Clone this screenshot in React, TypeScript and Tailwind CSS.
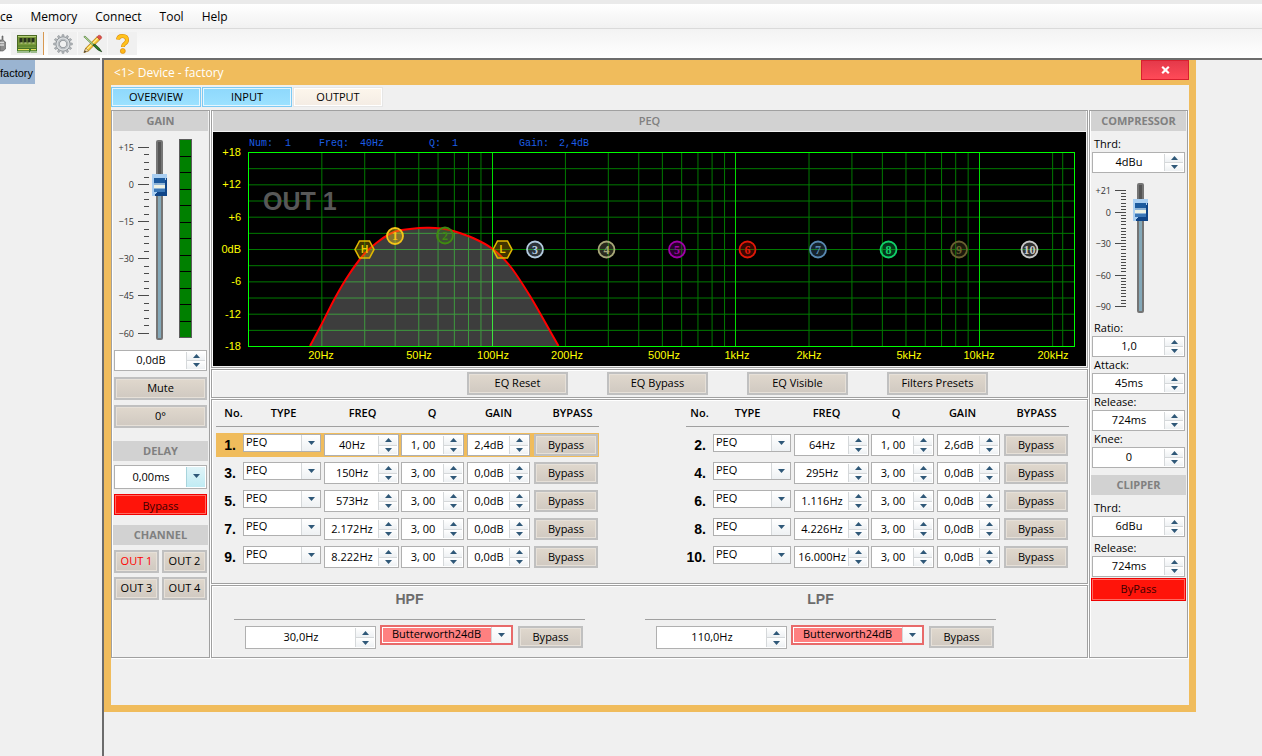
import React from "react";

const ui = "font-['Open_Sans','Noto_Sans',sans-serif]";
const panel =
  "border border-[#a0a0a0] p-px shadow-[inset_1px_1px_0_#fff,1px_1px_0_#fff]";
const boxBorder = "border border-[#b0b0b0]";

function Header({ children, light }: { children: string; light?: boolean }) {
  return (
    <h2
      className={`flex h-5 items-center justify-center bg-[#d2d2d2] pt-px text-[11px] text-[#808080] ${
        light ? "font-semibold" : "font-bold"
      }`}
    >
      {children}
    </h2>
  );
}

function Triangle({ up }: { up?: boolean }) {
  return (
    <svg width="7" height="4" viewBox="0 0 7 4" aria-hidden="true">
      <path d={up ? "M0 4 L3.5 0 L7 4 Z" : "M0 0 L7 0 L3.5 4 Z"} fill="#2f5878" />
    </svg>
  );
}

function Spin({ label, value, className = "" }: { label: string; value: string; className?: string }) {
  const half =
    "flex min-h-0 flex-1 items-center justify-center bg-linear-to-b from-white to-[#eef1f3]";
  return (
    <div className={`flex bg-white p-px ${boxBorder} ${className}`}>
      <input
        aria-label={label}
        defaultValue={value}
        className="min-w-0 flex-1 bg-white text-center text-[11px] text-black outline-none"
      />
      <div className="flex w-[19px] shrink-0 flex-col border-l border-[#d5d8da]">
        <button aria-label={`${label} up`} className={half}>
          <Triangle up />
        </button>
        <button aria-label={`${label} down`} className={`border-t border-[#d5d8da] ${half}`}>
          <Triangle />
        </button>
      </div>
    </div>
  );
}

function Btn({ children, className = "" }: { children: string; className?: string }) {
  return (
    <button
      className={`flex items-center justify-center border-2 border-[#c0c0c0] bg-linear-to-b from-[#e0d8cd] to-[#d0c9c1] text-[11px] whitespace-nowrap shadow-[inset_0_0_0_1px_#e6e0d8] ${className}`}
    >
      {children}
    </button>
  );
}

function RedBtn({ children, className = "" }: { children: string; className?: string }) {
  return (
    <button
      className={`flex items-center justify-center border border-[#f00000] bg-[#ff140a] text-[11px] text-[#3c0000] shadow-[inset_0_0_0_1px_#ff6a60] ${className}`}
    >
      {children}
    </button>
  );
}

function Scale({
  width,
  height,
  top,
  step,
  count,
  majors,
}: {
  width: number;
  height: number;
  top: number;
  step: number;
  count: number;
  majors: Record<number, string>;
}) {
  const ticks = Array.from({ length: count + 1 }, (_, i) => i);
  return (
    <svg width={width} height={height} className="shrink-0" aria-hidden="true">
      {ticks.map((i) => {
        const y = Math.round(top + i * step) + 0.5;
        const label = majors[i];
        return (
          <g key={i}>
            <line x1={width - (label ? 11 : 5)} x2={width} y1={y} y2={y} stroke="#4a4a4a" />
            {label && (
              <text
                x={width - 15}
                y={y + 3}
                textAnchor="end"
                fontSize="9"
                fill="#333"
                fontFamily="'Open Sans','Noto Sans',sans-serif"
              >
                {label}
              </text>
            )}
          </g>
        );
      })}
    </svg>
  );
}

const sliderClass =
  "m-0 w-4 shrink-0 appearance-none bg-transparent [writing-mode:vertical-lr] [direction:rtl] " +
  "[&::-webkit-slider-runnable-track]:mx-auto [&::-webkit-slider-runnable-track]:h-full [&::-webkit-slider-runnable-track]:w-[7px] " +
  "[&::-webkit-slider-runnable-track]:rounded-xs [&::-webkit-slider-runnable-track]:border-2 [&::-webkit-slider-runnable-track]:border-[#757575] " +
  "[&::-webkit-slider-thumb]:-ml-[6px] [&::-webkit-slider-thumb]:h-[22px] [&::-webkit-slider-thumb]:w-[15px] [&::-webkit-slider-thumb]:appearance-none " +
  "[&::-webkit-slider-thumb]:[background:linear-gradient(#1c5a9e_0_5px,#8fb4d6_5px_7px,#eef2e4_7px_10px,#8fb4d6_10px_11px,#3b78b8_11px)_center/11px_14px_no-repeat,linear-gradient(125deg,#aacff2_0_58%,#0f4588_58%)]";

const freqX = (f: number) => 35.5 + 243.6 * Math.log10(f / 10);
const vLines = [
  20, 30, 40, 50, 60, 70, 80, 90, 200, 300, 400, 500, 600, 700, 800, 900, 2000, 3000, 4000, 5000,
  6000, 7000, 8000, 9000, 20000, 22000,
];
const curve: [number, number][] = [
  [97, 214], [109, 191.5], [122, 166], [135, 144], [150, 123.5], [164, 110.5], [175, 103],
  [187, 98.3], [214, 95.7], [230, 96.8], [242, 99.5], [260, 106], [279, 116.5], [297, 134],
  [317, 164], [337, 199], [345.5, 214],
];
const curvePath = curve
  .map(([x, y], i) => {
    if (i === 0) return `M${x} ${y}`;
    const a = curve[Math.max(0, i - 2)];
    const b = curve[i - 1];
    const d = curve[Math.min(curve.length - 1, i + 1)];
    return `C${b[0] + (x - a[0]) / 6} ${b[1] + (y - a[1]) / 6} ${x - (d[0] - b[0]) / 6} ${
      y - (d[1] - b[1]) / 6
    } ${x} ${y}`;
  })
  .join(" ");

const nodes: [string, number, number, string, number][] = [
  ["1", 182, 104, "#f5c518", 0.4],
  ["2", 232, 103.5, "#3f8a10", 0.25],
  ["3", 322, 117.5, "#b4cce0", 0.25],
  ["4", 393.5, 117.5, "#a8a878", 0.25],
  ["5", 464, 117.5, "#a000a8", 0.25],
  ["6", 534.5, 117.5, "#e01808", 0.25],
  ["7", 605, 117.5, "#5888b0", 0.25],
  ["8", 675.5, 117.5, "#10d068", 0.25],
  ["9", 746, 117.5, "#6a6030", 0.25],
  ["10", 816.5, 117.5, "#c8c8c8", 0.25],
];

const readout: [string, number][] = [
  ["Num:", 36], ["1", 72], ["Freq:", 106], ["40Hz", 147], ["Q:", 216], ["1", 239],
  ["Gain:", 306], ["2,4dB", 346],
];

function Chart() {
  return (
    <svg viewBox="0 0 873 234" className="block w-full" role="img" aria-label="Equalizer response">
      <rect width="873" height="234" fill="#000" />
      <g fill="#1c5ee6" fontFamily="'Liberation Mono',monospace" fontSize="10">
        {readout.map(([t, x]) => (
          <text key={x} x={x} y="14">
            {t}
          </text>
        ))}
      </g>
      <g stroke="#007a00">
        {vLines.map((f) => {
          const x = freqX(f);
          return <line key={f} x1={x} x2={x} y1="20" y2="214" />;
        })}
        {Array.from({ length: 11 }, (_, i) => {
          const y = 20.5 + (i + 1) * 16.17;
          return <line key={i} x1="35" x2="862" y1={y} y2={y} />;
        })}
      </g>
      <text x="50" y="78" fill="#585858" fontFamily="'Liberation Sans',sans-serif" fontWeight="bold" fontSize="25">
        OUT 1
      </text>
      <g stroke="#00dc00">
        <line x1="279.5" x2="279.5" y1="20" y2="214" />
        <line x1="522.5" x2="522.5" y1="20" y2="214" />
        <line x1="766.5" x2="766.5" y1="20" y2="214" />
      </g>
      <path d={`${curvePath} Z`} fill="#fff" fillOpacity="0.24" />
      <path d={curvePath} fill="none" stroke="#f00" strokeWidth="2" />
      <rect x="35.5" y="20.5" width="826" height="194" fill="none" stroke="#00ff00" />
      <g fill="#ffff00" fontFamily="'Liberation Sans',sans-serif" fontSize="11">
        {["+18", "+12", "+6", "0dB", "-6", "-12", "-18"].map((t, i) => (
          <text key={t} x="28" y={24 + i * 32.3} textAnchor="end">
            {t}
          </text>
        ))}
        {(
          [
            ["20Hz", 108], ["50Hz", 206], ["100Hz", 280], ["200Hz", 354], ["500Hz", 451],
            ["1kHz", 524], ["2kHz", 596], ["5kHz", 696], ["10kHz", 766], ["20kHz", 840],
          ] as [string, number][]
        ).map(([t, x]) => (
          <text key={t} x={x} y="227" textAnchor="middle">
            {t}
          </text>
        ))}
      </g>
      {(
        [
          ["H", 151.5],
          ["L", 289.5],
        ] as [string, number][]
      ).map(([t, x]) => (
        <g key={t}>
          <path
            d={`M${x - 9.5} 117.5 L${x - 5} 109 H${x + 5} L${x + 9.5} 117.5 L${x + 5} 126 H${x - 5} Z`}
            fill="#d8b000"
            fillOpacity="0.3"
            stroke="#e0b800"
            strokeWidth="1.6"
          />
          <text x={x} y="121" textAnchor="middle" fill="#f0c800" fontFamily="'Liberation Sans',sans-serif" fontWeight="bold" fontSize="10">
            {t}
          </text>
        </g>
      ))}
      {nodes.map(([t, x, y, c, o]) => (
        <g key={t}>
          <circle cx={x} cy={y} r="8" fill={c} fillOpacity={o} stroke={c} strokeWidth="1.8" />
          <text x={x} y={y + 4} textAnchor="middle" fill={c} fontFamily="'Liberation Serif',serif" fontWeight="bold" fontSize="12">
            {t}
          </text>
        </g>
      ))}
    </svg>
  );
}

type Band = { n: number; f: string; q: string; g: string; on?: boolean };
const left: Band[] = [
  { n: 1, f: "40Hz", q: "1, 00", g: "2,4dB", on: true },
  { n: 3, f: "150Hz", q: "3, 00", g: "0,0dB" },
  { n: 5, f: "573Hz", q: "3, 00", g: "0,0dB" },
  { n: 7, f: "2.172Hz", q: "3, 00", g: "0,0dB" },
  { n: 9, f: "8.222Hz", q: "3, 00", g: "0,0dB" },
];
const right: Band[] = [
  { n: 2, f: "64Hz", q: "1, 00", g: "2,6dB" },
  { n: 4, f: "295Hz", q: "3, 00", g: "0,0dB" },
  { n: 6, f: "1.116Hz", q: "3, 00", g: "0,0dB" },
  { n: 8, f: "4.226Hz", q: "3, 00", g: "0,0dB" },
  { n: 10, f: "16.000Hz", q: "3, 00", g: "0,0dB" },
];
const leftHead: [string, string][] = [
  ["No.", "pl-2"], ["TYPE", ""], ["FREQ", ""], ["Q", "pr-1"], ["GAIN", "pr-1"], ["BYPASS", "pl-3"],
];
const rightHead: [string, string][] = [
  ["No.", ""], ["TYPE", "pr-3"], ["FREQ", "pr-3"], ["Q", "pr-4"], ["GAIN", "pr-4"], ["BYPASS", ""],
];

function BandTable({ bands, head }: { bands: Band[]; head: [string, string][] }) {
  return (
    <table className="w-[383px] table-fixed border-separate border-spacing-x-0 border-spacing-y-1">
      <colgroup>
        <col className="w-[27px]" />
        <col className="w-[81px]" />
        <col className="w-[77px]" />
        <col className="w-[66px]" />
        <col className="w-[67px]" />
        <col className="w-[65px]" />
      </colgroup>
      <thead>
        <tr>
          {head.map(([h, pad]) => (
            <th key={h} className="h-[25px] p-0 align-top text-[11px] leading-[18px] font-semibold">
              <div className={`h-[23px] border-b border-[#a0a0a0] ${pad}`}>{h}</div>
            </th>
          ))}
        </tr>
      </thead>
      <tbody>
        {bands.map((b) => {
          const td = `h-6 p-0 pt-px align-top ${b.on ? "bg-[#f0bc5c]" : ""}`;
          return (
            <tr key={b.n}>
              <td className={`${td} pr-[7px]`}>
                <div className="flex h-[22px] items-center justify-end font-['Liberation_Sans',sans-serif] text-[14px] font-bold">
                  {b.n}.
                </div>
              </td>
              <td className={td}>
                <div className="relative w-[78px]">
                  <select
                    aria-label={`Band ${b.n} type`}
                    className={`block h-[18px] w-full appearance-none bg-white pb-[3px] pl-[2px] text-[11px] leading-none outline-none ${boxBorder}`}
                  >
                    <option>PEQ</option>
                  </select>
                  <span className="pointer-events-none absolute inset-y-px right-px flex w-[19px] items-center justify-center border-l border-[#d5d8da] bg-linear-to-b from-white to-[#eef1f3]">
                    <Triangle />
                  </span>
                </div>
              </td>
              <td className={td}>
                <Spin label={`Band ${b.n} frequency`} value={b.f} className="h-[22px] w-[75px]" />
              </td>
              <td className={td}>
                <Spin label={`Band ${b.n} Q`} value={b.q} className="h-[22px] w-[63px]" />
              </td>
              <td className={td}>
                <Spin label={`Band ${b.n} gain`} value={b.g} className="h-[22px] w-[63px]" />
              </td>
              <td className={td}>
                <Btn className="h-[22px] w-16">Bypass</Btn>
              </td>
            </tr>
          );
        })}
      </tbody>
    </table>
  );
}

function Filter({ title, value }: { title: string; value: string }) {
  return (
    <section className="w-[351px]">
      <h3 className="h-[33px] border-b border-[#a0a0a0] pt-[2px] text-center font-['Liberation_Sans',sans-serif] text-[14px] font-bold text-[#6c6c6c]">
        {title}
      </h3>
      <div className="flex items-start pt-[5px] pl-[11px]">
        <Spin label={`${title} frequency`} value={value} className="mt-px h-[23px] w-[131px]" />
        <div className="relative ml-[4px] w-[133px]">
          <select
            aria-label={`${title} slope`}
            className="block h-5 w-full appearance-none border-2 border-[#e86a6a] bg-[#ff8080] pb-[3px] pl-[10px] text-[11px] leading-none shadow-[inset_0_0_0_1px_#fff] outline-none"
          >
            <option>Butterworth24dB</option>
          </select>
          <span className="pointer-events-none absolute inset-y-[2px] right-[2px] flex w-5 items-center justify-center border-l border-[#d5d8da] bg-linear-to-b from-white to-[#f2f4f5]">
            <Triangle />
          </span>
        </div>
        <Btn className="mt-px ml-[5px] h-[22px] w-[65px]">Bypass</Btn>
      </div>
    </section>
  );
}

function Labelled({ label, value, className = "" }: { label: string; value: string; className?: string }) {
  return (
    <div className={className}>
      <div className="h-4 pl-[3px] text-[11px] leading-[15px]">{label}:</div>
      <Spin label={label} value={value} className="mx-px h-[21px]" />
    </div>
  );
}

function GearIcon() {
  const teeth = Array.from({ length: 12 }, (_, i) => i * 30);
  return (
    <svg width="20" height="20" viewBox="0 0 20 20" aria-hidden="true">
      {teeth.map((a) => (
        <path
          key={a}
          d="M8.8 3.5 L9.2 0.7 H10.8 L11.2 3.5 Z"
          fill="#c4c8cc"
          stroke="#858a8e"
          strokeWidth="0.7"
          transform={`rotate(${a} 10 10)`}
        />
      ))}
      <circle cx="10" cy="10" r="5.3" fill="none" stroke="#8a8f94" strokeWidth="4.2" />
      <circle cx="10" cy="10" r="5.3" fill="none" stroke="#dadddf" strokeWidth="2.8" />
      <circle cx="10" cy="10" r="4.8" fill="none" stroke="#a4a9ae" strokeWidth="0.8" />
    </svg>
  );
}

function PencilIcon() {
  return (
    <svg width="20" height="20" viewBox="0 0 20 20" aria-hidden="true">
      <path d="M1 18.5 L2.8 14 L13.8 3 L16.8 5.8 L5.6 16.8 Z" fill="#f4c430" stroke="#a06a10" strokeWidth="0.7" />
      <path d="M4 15.2 L15 4.2" stroke="#fff0a0" strokeWidth="1.1" />
      <path d="M13.8 3 L15.4 1.4 Q16.6 0.8 18 2.1 Q19.2 3.4 18.4 4.4 L16.8 5.8 Z" fill="#e05048" stroke="#a03028" strokeWidth="0.5" />
      <path d="M1 18.5 L2.8 14 L5.6 16.8 Z" fill="#f0d8a8" stroke="#80601c" strokeWidth="0.5" />
      <path d="M1 18.5 L1.8 16.4 L3.2 17.7 Z" fill="#333" />
      <path d="M0.8 2.8 L2 2 L11 10.5 L10 11.6 Z" fill="#b6d890" stroke="#3f7030" strokeWidth="0.6" />
      <path d="M10 11 L12 10.2 Q16 13 18.8 17.8 Q14 16.5 10 11 Z" fill="#2f7a28" stroke="#1c401c" strokeWidth="0.7" />
    </svg>
  );
}

function HelpIcon() {
  return (
    <svg width="16" height="20" viewBox="0 0 16 20" aria-hidden="true">
      <path
        d="M3 5.5 Q3.4 2 7.4 2 Q12 2 12 6 Q12 8.3 9.8 9.6 Q7.9 10.8 7.9 13"
        fill="none"
        stroke="#d88810"
        strokeWidth="4"
      />
      <path
        d="M3 5.3 Q3.4 2 7.4 2 Q12 2 12 6 Q12 8.3 9.8 9.6 Q7.9 10.8 7.9 12.8"
        fill="none"
        stroke="#ffc21c"
        strokeWidth="2.8"
      />
      <circle cx="7.8" cy="17" r="2.5" fill="#ffb818" stroke="#d88810" strokeWidth="0.7" />
    </svg>
  );
}

function BoardIcon() {
  return (
    <svg width="20" height="18" viewBox="0 0 20 18" aria-hidden="true">
      <rect x="0.5" y="0.5" width="19" height="13" fill="#7a9a3c" stroke="#4c6a24" />
      <path d="M1 1.5 H19" stroke="#b4cc78" />
      {[2.5, 6.5, 10.5, 14.5].map((x) => (
        <g key={x}>
          <rect x={x} y="3" width="3" height="4.5" fill="#28321c" />
          <path d={`M${x + 1} 8 H${x + 3}`} stroke="#dde6b8" strokeWidth="0.8" />
        </g>
      ))}
      <path d="M1 11 H19" stroke="#5f8a30" strokeWidth="1.6" />
      <path d="M0 13.5 H20 V16 H13.5 V17.5 H12 V16 H0 Z" fill="#3f7a28" />
      <path d="M1 14.6 H12 M14 14.6 H19" stroke="#e8e060" strokeWidth="1.2" />
      <path d="M0 17 H12 M14 17 H20" stroke="#4f8a30" />
    </svg>
  );
}

export default function App() {
  return (
    <div className={`flex min-h-screen flex-col bg-[#f0f0f0] text-[12px] text-black ${ui}`}>
      <nav className="flex h-[29px] items-center gap-[18px] border-t-4 border-b border-t-[#eaeaea] border-b-[#dadada] bg-linear-to-b from-white to-[#f1f1f1] pt-[2px]">
        {["ce", "Memory", "Connect", "Tool", "Help"].map((m) => (
          <button key={m}>{m}</button>
        ))}
      </nav>
      <div className="flex h-[29px] items-center bg-linear-to-b from-[#f3f3f3] to-white">
        <button aria-label="Printer" className="w-[11px]">
          <svg width="6" height="18" viewBox="0 0 6 18" className="block" aria-hidden="true">
            <path d="M0 5 H2 V1 H3 V5 L5.5 7 V14 L3 16 H0 Z" fill="#8c8c8c" stroke="#555" strokeWidth="0.6" />
            <path d="M0 7.5 H4 M0 10 H4" stroke="#d8d8d8" strokeWidth="1.4" />
          </svg>
        </button>
        <button aria-label="Memory board" className="flex h-[23px] w-8 items-center justify-center bg-[#f0f0f0]">
          <BoardIcon />
        </button>
        <span className="mr-1 h-[23px] w-px bg-[#d89850]" />
        <div className="flex">
          <button aria-label="Settings" className="flex h-[23px] w-[30px] items-center justify-center border-r border-[#f8f8f8] bg-[#f0f0f0]">
            <GearIcon />
          </button>
          <button aria-label="Edit" className="flex h-[23px] w-[30px] items-center justify-center border-r border-[#f8f8f8] bg-[#f0f0f0]">
            <PencilIcon />
          </button>
          <button aria-label="Help" className="flex h-[23px] w-[29px] items-center justify-center bg-[#f0f0f0]">
            <HelpIcon />
          </button>
        </div>
      </div>

      <div className="flex flex-1">
        <aside className="w-[100px] shrink-0 border-t-2 border-[#6c6c6c]">
          <div className="flex h-6 w-[35px] items-center bg-[#9ab4d1] pt-[3px] font-['Liberation_Sans',sans-serif] text-[11px]">
            factory
          </div>
        </aside>
        <div className="ml-[2px] flex flex-1 items-start border-t-2 border-l-2 border-[#6c6c6c] pr-[66px]">
          <main className="min-w-0 flex-1 bg-[#f0bc5c] px-[7px] pb-[7px]">
            <header className="flex h-[25px] items-start justify-between">
              <h1 className="pt-1 pl-[3px] text-[12px] text-white">&lt;1&gt; Device - factory</h1>
              <button
                aria-label="Close"
                className="flex h-5 w-12 items-center justify-center border border-[#d8202e] bg-linear-to-b from-[#e4394a] to-[#ff4a58]"
              >
                <svg width="9" height="8" viewBox="0 0 9 8" aria-hidden="true">
                  <path d="M1.2 0.8 L7.8 7.2 M7.8 0.8 L1.2 7.2" stroke="#fff" strokeWidth="2.2" />
                </svg>
              </button>
            </header>

            <div className="bg-[#f0f0f0] pt-[2px] pr-px pb-[47px]">
              <div className="mb-[3px] flex h-5 gap-px text-[11px]">
                <button className="w-[90px] border border-[#7ccaf4] bg-linear-to-b from-[#8ed8fc] to-[#9ce2ff] shadow-[inset_0_0_0_1px_#e4f6ff]">
                  OVERVIEW
                </button>
                <button className="w-[90px] border border-[#7ccaf4] bg-linear-to-b from-[#8ed8fc] to-[#9ce2ff] shadow-[inset_0_0_0_1px_#e4f6ff]">
                  INPUT
                </button>
                <button className="w-[90px] border border-[#e6e6e6] bg-linear-to-b from-[#fdf6ec] to-[#f4ece4] shadow-[inset_0_0_0_1px_#fff]">
                  OUTPUT
                </button>
              </div>

              <div className="grid grid-cols-[99px_minmax(0,1fr)_99px] gap-px">
                <div className={`${panel} pt-0`}>
                  <Header>GAIN</Header>
                  <div className="flex">
                    <Scale
                      width={36}
                      height={219}
                      top={16}
                      step={7.42}
                      count={25}
                      majors={{ 0: "+15", 5: "0", 10: "−15", 15: "−30", 20: "−45", 25: "−60" }}
                    />
                    <input
                      type="range"
                      aria-label="Gain"
                      min={-60}
                      max={15}
                      defaultValue={1}
                      className={`${sliderClass} mt-[9px] ml-[2px] h-[200px] [&::-webkit-slider-runnable-track]:bg-[linear-gradient(#555_0_22%,#84a8b8_22%)]`}
                    />
                    <div className="mt-2 ml-3 flex h-[199px] w-[13px] flex-col divide-y divide-black border border-[#5c5c5c] bg-[#008000]">
                      {Array.from({ length: 12 }, (_, i) => (
                        <div key={i} className="flex-1" />
                      ))}
                    </div>
                  </div>
                  <Spin label="Gain value" value="0,0dB" className="mx-px h-[21px]" />
                  <div className="mx-px mt-[6px] flex flex-col gap-[5px]">
                    <Btn className="h-[23px]">Mute</Btn>
                    <Btn className="h-[23px]">0°</Btn>
                  </div>
                  <div className="mt-[13px]">
                    <Header>DELAY</Header>
                  </div>
                  <div className={`mx-px mt-1 flex h-6 bg-white p-px ${boxBorder}`}>
                    <input
                      aria-label="Delay"
                      defaultValue="0,00ms"
                      className="min-w-0 flex-1 text-center text-[11px] outline-none"
                    />
                    <button
                      aria-label="Delay unit"
                      className="flex w-[19px] items-start justify-center border-l border-[#a8d4dc] bg-linear-to-b from-[#e0f4f8] to-[#c0ecf4] pt-[7px]"
                    >
                      <Triangle />
                    </button>
                  </div>
                  <RedBtn className="mx-px mt-[5px] h-[21px] w-[93px] pt-[3px]">Bypass</RedBtn>
                  <div className="mt-[10px]">
                    <Header>CHANNEL</Header>
                  </div>
                  <div className="mx-px mt-[5px] grid grid-cols-2 gap-x-[3px] gap-y-1">
                    <Btn className="h-[23px] text-[#ff0000]">OUT 1</Btn>
                    <Btn className="h-[23px]">OUT 2</Btn>
                    <Btn className="h-[23px]">OUT 3</Btn>
                    <Btn className="h-[23px]">OUT 4</Btn>
                  </div>
                </div>

                <div className="flex flex-col gap-px">
                  <section className={`${panel} pt-0`}>
                    <Header light>PEQ</Header>
                    <div className="mt-px">
                      <Chart />
                    </div>
                  </section>
                  <section className={`${panel} flex h-[29px] items-center gap-[39px] pl-[255px]`}>
                    <Btn className="h-[23px] w-[101px]">EQ Reset</Btn>
                    <Btn className="h-[23px] w-[101px]">EQ Bypass</Btn>
                    <Btn className="h-[23px] w-[101px]">EQ Visible</Btn>
                    <Btn className="h-[23px] w-[101px]">Filters Presets</Btn>
                  </section>
                  <section className={`${panel} flex h-[185px] items-start gap-[87px] pt-0 pl-1`}>
                    <BandTable bands={left} head={leftHead} />
                    <BandTable bands={right} head={rightHead} />
                  </section>
                  <section className={`${panel} flex h-[73px] gap-[60px] pl-[22px]`}>
                    <Filter title="HPF" value="30,0Hz" />
                    <Filter title="LPF" value="110,0Hz" />
                  </section>
                </div>

                <div className={`${panel} pt-0`}>
                  <Header>COMPRESSOR</Header>
                  <Labelled label="Thrd" value="4dBu" className="mt-[5px]" />
                  <div className="flex h-[147px]">
                    <Scale
                      width={35}
                      height={147}
                      top={17}
                      step={3.13}
                      count={37}
                      majors={{ 0: "+21", 7: "0", 17: "−30", 27: "−60", 37: "−90" }}
                    />
                    <input
                      type="range"
                      aria-label="Threshold"
                      min={-90}
                      max={21}
                      defaultValue={6}
                      className={`${sliderClass} mt-[10px] ml-[6px] h-[130px] [&::-webkit-slider-runnable-track]:bg-[linear-gradient(#555_0_20%,#84a8b8_20%)]`}
                    />
                  </div>
                  <Labelled label="Ratio" value="1,0" />
                  <Labelled label="Attack" value="45ms" />
                  <Labelled label="Release" value="724ms" />
                  <Labelled label="Knee" value="0" />
                  <div className="mt-[7px]">
                    <Header>CLIPPER</Header>
                  </div>
                  <Labelled label="Thrd" value="6dBu" className="mt-[5px]" />
                  <Labelled label="Release" value="724ms" className="mt-[3px]" />
                  <RedBtn className="mt-px h-[23px] w-full">ByPass</RedBtn>
                </div>
              </div>
            </div>
          </main>
        </div>
      </div>
    </div>
  );
}
